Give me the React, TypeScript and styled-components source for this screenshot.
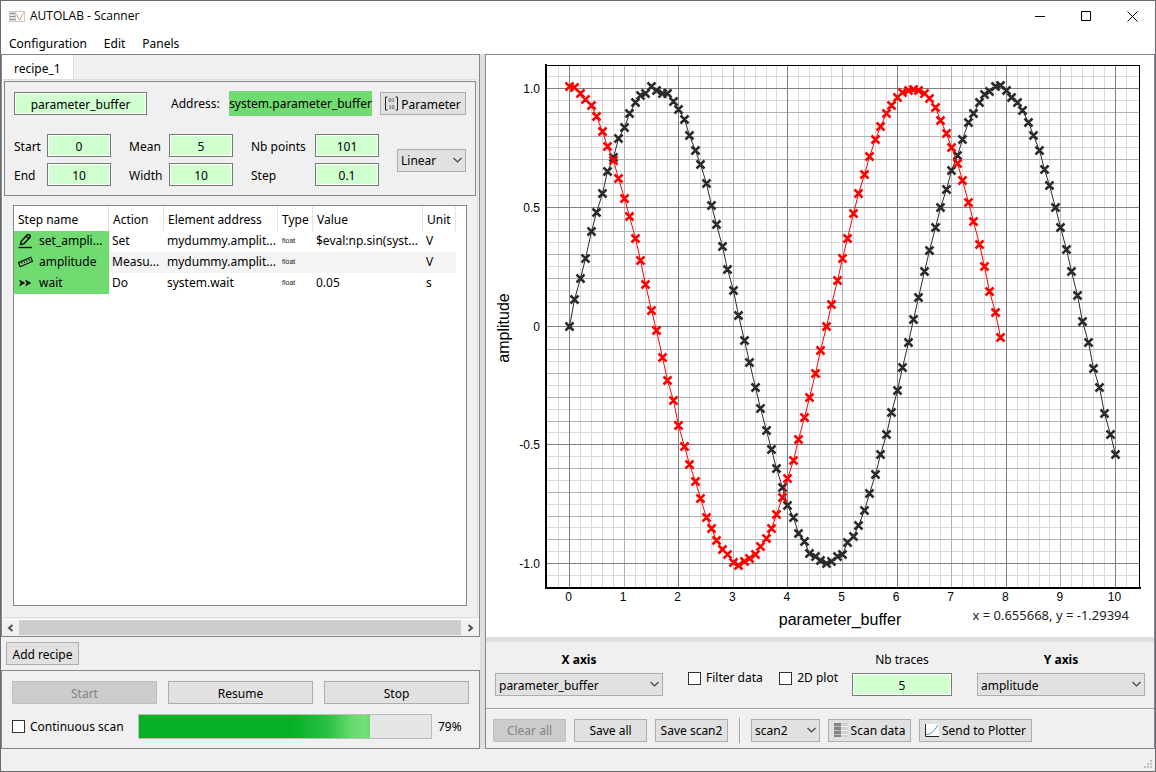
import React from "react";
import styled, { createGlobalStyle, css } from "styled-components";

const color = {
  face: "#f0f0f0",
  frame: "#828790",
  line: "#dcdcdc",
  button: "#e1e1e1",
  buttonEdge: "#adadad",
  field: "#d0ffd0",
  fieldEdge: "#7a7a7a",
  accent: "#70db70",
};

const GlobalStyle = createGlobalStyle`
  *, *::before, *::after { box-sizing: border-box; }
  body { margin: 0; background: ${color.face}; }
  body, button, input, select, table {
    font-family: "Noto Sans", "Open Sans", sans-serif;
    font-size: 12px;
    line-height: 16px;
    color: #000;
  }
`;

const Window = styled.div`
  display: flex;
  flex-direction: column;
  min-height: 100vh;
  border: 1px solid #6b6b6e;
  background: ${color.face};
`;

const TitleBar = styled.header`
  display: flex;
  align-items: center;
  height: 30px;
  padding-left: 8px;
  background: #fff;
`;

const Title = styled.h1`
  flex: 1;
  margin: 0 0 0 5px;
  font-family: "Open Sans", "Noto Sans", sans-serif;
  font-size: 12px;
  font-weight: 400;
  line-height: 16px;
`;

const CaptionButton = styled.button`
  display: flex;
  align-items: center;
  justify-content: center;
  width: 46px;
  height: 30px;
  padding: 0;
  border: 0;
  background: transparent;
`;

const MenuBar = styled.nav`
  display: flex;
  gap: 17px;
  height: 23px;
  padding: 5px 8px 2px;
  background: #fff;
`;

const MenuItem = styled.button`
  padding: 0;
  border: 0;
  background: transparent;
`;

const Workspace = styled.main`
  flex: 1;
  display: grid;
  grid-template-columns: minmax(0, 479fr) 5px minmax(0, 670fr);
`;

const Splitter = styled.div`
  flex: none;
  min-height: 5px;
  background: #dfdfdf;
`;

const Column = styled.section`
  display: flex;
  flex-direction: column;
  min-width: 0;
`;

const ScrollArea = styled.div`
  flex: 1;
  display: flex;
  flex-direction: column;
  border: 1px solid ${color.frame};
`;

const TabBar = styled.div`
  display: flex;
  height: 24px;
`;

const Tab = styled.button`
  padding: 4px 12px 0;
  border: 0;
  border-right: 1px solid ${color.line};
  background: #fff;
`;

const TabPane = styled.div`
  flex: 1;
  display: flex;
  flex-direction: column;
  margin-right: 1px;
  padding: 1px 1px 11px;
  border: 1px solid ${color.line};
  border-left-color: #fff;
`;

const ParameterFrame = styled.div`
  border: 1px solid ${color.frame};
  padding: 9px;
`;

const AddressRow = styled.div`
  display: flex;
  align-items: center;
  height: 25px;
`;

const Address = styled.output`
  margin: 0 8px 0 auto;
  height: 25px;
  line-height: 26px;
  background: ${color.accent};
`;

const AddressLabel = styled.label`
  margin-left: 24px;
`;

const RangeRow = styled.div`
  display: flex;
  align-items: center;
  justify-content: space-between;
  margin-top: 18px;
`;

const FieldPair = styled.div<{ $width: string }>`
  display: grid;
  grid-template-columns: 1fr 64px;
  align-items: center;
  gap: 6px;
  width: ${(p) => p.$width};
  white-space: nowrap;
  label { padding-top: 2px; }
`;

const TextField = styled.input<{ $width: string }>`
  appearance: none;
  width: ${(p) => p.$width};
  height: 23px;
  padding: 1px 2px 0;
  border: 1px solid ${color.fieldEdge};
  background: ${color.field};
  box-shadow: inset 0 0 0 1px #fff;
  text-align: center;
  border-radius: 0;
`;

const Button = styled.button<{ $width?: string }>`
  display: inline-flex;
  align-items: center;
  justify-content: center;
  gap: 3px;
  width: ${(p) => p.$width ?? "auto"};
  height: 23px;
  padding: 2px 3px 0;
  border: 1px solid ${color.buttonEdge};
  background: ${color.button};
  white-space: nowrap;
  svg { margin-bottom: 2px; }
  &:disabled {
    color: #838383;
    background: #ccc;
    border-color: #bfbfbf;
  }
`;

const SelectBox = styled.div<{ $width: string }>`
  position: relative;
  width: ${(p) => p.$width};
  height: 23px;
  svg {
    position: absolute;
    right: 4px;
    top: 8px;
    pointer-events: none;
  }
`;

const NativeSelect = styled.select`
  appearance: none;
  width: 100%;
  height: 23px;
  padding: 2px 16px 0 3px;
  border: 1px solid ${color.buttonEdge};
  border-radius: 0;
  background: ${color.button};
`;

const TreeFrame = styled.div`
  flex: 1;
  margin: 9px 9px 0;
  padding-right: 10px;
  border: 1px solid ${color.frame};
  background: #fff;
`;

const StepTable = styled.table`
  width: 100%;
  table-layout: fixed;
  border-collapse: separate;
  border-spacing: 0;
  white-space: nowrap;
`;

const cell = css`
  padding: 0 0 0 4px;
  text-align: left;
  font-weight: 400;
  overflow: hidden;
`;

const HeadCell = styled.th`
  ${cell}
  height: 25px;
  padding-top: 2px;
  border-right: 1px solid #e5e5e5;
`;

const StepRow = styled.tr`
  height: 21px;
  &:nth-child(even) { background: #f4f4f4; }
`;

const Cell = styled.td`
  ${cell}
  padding: 0 0 1px 3px;
`;

const NameCell = styled.td`
  ${cell}
  padding-bottom: 1px;
  background: ${color.accent};
`;

const StepName = styled.span`
  display: flex;
  align-items: center;
  gap: 6px;
`;

const TypeTag = styled.span`
  padding-left: 1px;
  font-family: "Liberation Sans", Arial, sans-serif;
  font-size: 7px;
  line-height: 8px;
  vertical-align: 2px;
  color: #222;
`;

const ScrollBar = styled.div`
  display: grid;
  grid-template-columns: 17px 1fr 18px;
  height: 17px;
  margin-top: 1px;
  padding-bottom: 1px;
  border-top: 1px solid #fff;
`;

const ScrollButton = styled.button`
  display: flex;
  align-items: center;
  justify-content: center;
  padding: 0;
  border: 0;
  background: ${color.face};
`;

const ScrollThumb = styled.div`
  background: #cdcdcd;
`;

const RecipeBar = styled.div`
  padding: 5px 5px;
  height: 33px;
`;

const RunFrame = styled.div`
  border: 1px solid ${color.frame};
  padding: 10px 10px 9px;
`;

const RunButtons = styled.div`
  display: grid;
  grid-template-columns: repeat(3, 1fr);
  gap: 11px;
`;

const RunStatus = styled.div`
  display: flex;
  align-items: center;
  margin-top: 10px;
`;

const CheckLabel = styled.label`
  display: inline-flex;
  align-items: center;
  gap: 5px;
  white-space: nowrap;
`;

const CheckBox = styled.input`
  appearance: none;
  width: 13px;
  height: 13px;
  margin: 0;
  border: 1px solid #333;
  background: #fff;
`;

const ProgressTrack = styled.div`
  flex: 1;
  height: 25px;
  margin: 0 6px 0 14px;
  border: 1px solid #bcbcbc;
  background: #e6e6e6;
`;

const ProgressFill = styled.div`
  height: 100%;
  background: linear-gradient(90deg, #06b025 66%, #2cc045 82%, #66da6c 92%, #74e07a 98%, #66da6c);
`;

const Percent = styled.span`
  width: 31px;
`;

const PlotColumn = styled(Column)`
  border: 1px solid ${color.frame};
`;

const PlotArea = styled.div`
  flex: 1 1 0;
  min-height: 400px;
  display: flex;
  background: #fff;
  svg { display: block; width: 100%; height: 100%; }
`;

const AxisBar = styled.div`
  display: flex;
  height: 66px;
  padding: 10px 9px 12px;
`;

const AxisChoice = styled.div<{ $bold?: boolean; $width: string }>`
  display: flex;
  flex-direction: column;
  align-items: center;
  justify-content: space-between;
  width: ${(p) => p.$width};
  > label { font-weight: ${(p) => (p.$bold ? 700 : 400)}; }
`;

const CheckGroup = styled.div`
  flex: 1;
  display: flex;
  align-items: center;
  justify-content: space-between;
  padding: 8px 14px 0 25px;
`;

const TracesChoice = styled(AxisChoice)`
  margin-right: 25px;
`;

const ScanBar = styled.div`
  display: flex;
  align-items: center;
  gap: 8px;
  height: 40px;
  padding: 3px 7px 0;
  border-top: 1px solid #a0a0a0;
  box-shadow: inset 0 1px #fff;
`;

const Divider = styled.div`
  width: 2px;
  height: 25px;
  margin: 0 2px 0 3px;
  border-left: 1px solid #a0a0a0;
  background: #fff;
`;

const StatusBar = styled.footer`
  display: flex;
  align-items: flex-end;
  justify-content: flex-end;
  height: 22px;
  padding: 2px;
`;

/* ---------- Icons ---------- */

const AppIcon = () => (
  <svg width="16" height="11" viewBox="0 0 16 11" aria-hidden="true">
    <rect width="16" height="11" fill="#c9c9c9" />
    <rect x="1" y="1" width="5" height="9" fill="#dfe8df" />
    <path d="M1 2.500h5M1 5.500h5M1 8.500h5" stroke="#8e8e8e" />
    <rect x="7" y="1" width="8" height="9" fill="#fff" />
    <path d="M7.500 3 L9 6.500 L10.500 9 L12 6.500 L14.500 1.500" stroke="#f0918f" fill="none" />
  </svg>
);

const PencilIcon = () => (
  <svg width="15" height="16" viewBox="0 0 15 16" fill="none" stroke="#111" aria-hidden="true">
    <path d="M2.500 11.500 L3.200 8.300 L9.200 1.900 Q10.500 1 11.800 2.200 Q12.900 3.500 11.900 4.600 L5.800 10.800 Z M8.300 3.200 L10.900 5.600" strokeWidth="1.500" />
    <path d="M0.500 14.500h13.500" strokeWidth="1.400" />
  </svg>
);

const RulerIcon = () => (
  <svg width="15" height="16" viewBox="0 0 15 16" fill="none" stroke="#111" aria-hidden="true">
    <path d="M0.500 8.600 L12.800 3.300 L14.500 7.400 L2.200 12.800 Z" strokeWidth="1.200" />
    <path d="M3.200 7.700 l1 2.200 M5.700 6.700 l1 2.200 M8.200 5.700 l1 2.200 M10.700 4.700 l1 2.200" />
  </svg>
);

const ForwardIcon = () => (
  <svg width="15" height="16" viewBox="0 0 15 16" fill="#111" aria-hidden="true">
    <path d="M1 4.500 L7.300 8 L1 11.500 L2.600 8 Z M7 4.500 L13.300 8 L7 11.500 L8.600 8 Z" />
  </svg>
);

const MatrixIcon = () => (
  <svg width="13" height="15" viewBox="0 0 13 15" aria-hidden="true">
    <path d="M2.500 1H0.500V14H2.500M10.500 1H12.500V14H10.500" fill="none" stroke="#222" />
    <g fontFamily="Liberation Serif, serif" fontSize="6" fill="#222" textAnchor="middle">
      <text x="6.500" y="6">01</text>
      <text x="6.500" y="13">10</text>
    </g>
  </svg>
);

const TableIcon = () => (
  <svg width="14" height="14" viewBox="0 0 14 14" aria-hidden="true">
    <rect width="14" height="14" fill="#d2d2d2" />
    <rect width="7" height="14" fill="#858585" />
    <path d="M0 3.500h7M0 7.500h7M0 11.500h7" stroke="#bdbdbd" />
    <path d="M7 3.500h7M7 7.500h7M7 11.500h7" stroke="#efefef" />
  </svg>
);

const CurveIcon = () => (
  <svg width="14" height="13" viewBox="0 0 14 13" fill="none" aria-hidden="true">
    <rect width="14" height="13" fill="#fff" />
    <path d="M1 10.500 C6 10.500 9 7 13 1" stroke="#4a90c8" />
    <path d="M0.500 0V12.500H14" stroke="#222" />
  </svg>
);

const Chevron = () => (
  <svg width="9" height="6" viewBox="0 0 9 6" fill="none" aria-hidden="true">
    <path d="M0.500 1 L4.500 5 L8.500 1" stroke="#444" strokeWidth="1.200" />
  </svg>
);

const ScrollArrow = ({ right }: { right?: boolean }) => (
  <svg width="7" height="8" viewBox="0 0 7 8" fill="none" aria-hidden="true">
    <path d={right ? "M1.500 1 L5 4 L1.500 7" : "M5.500 1 L2 4 L5.500 7"} stroke="#505050" strokeWidth="2" />
  </svg>
);

const SizeGrip = () => (
  <svg width="9" height="9" viewBox="0 0 9 9" fill="#bfbfbf" aria-hidden="true">
    <path d="M6 0h2v2h-2zM3 3h2v2h-2zM6 3h2v2h-2zM0 6h2v2h-2zM3 6h2v2h-2zM6 6h2v2h-2z" />
  </svg>
);

/* ---------- Plot ---------- */

const scan2 = [
  1.01, 1.003, 0.979, 0.952, 0.927, 0.883, 0.817, 0.757, 0.696, 0.619,
  0.535, 0.462, 0.367, 0.276, 0.174, 0.067, -0.017, -0.132, -0.228, -0.313,
  -0.417, -0.509, -0.585, -0.656, -0.728, -0.808, -0.853, -0.905, -0.939, -0.964,
  -0.996, -1.007, -0.99, -0.977, -0.96, -0.93, -0.896, -0.853, -0.795, -0.72,
  -0.644, -0.568, -0.479, -0.385, -0.303, -0.202, -0.102, -0.004, 0.092, 0.193,
  0.286, 0.37, 0.475, 0.559, 0.636, 0.714, 0.787, 0.838, 0.893, 0.93,
  0.963, 0.983, 0.991, 0.996, 0.993, 0.98, 0.96, 0.922, 0.866, 0.809,
  0.75, 0.684, 0.612, 0.522, 0.442, 0.344, 0.249, 0.147, 0.058, -0.05,
];

const scan1 = [
  0, 0.11, 0.198, 0.286, 0.4, 0.479, 0.559, 0.649, 0.708, 0.791,
  0.836, 0.896, 0.939, 0.969, 0.977, 1.007, 0.991, 0.98, 0.977, 0.947,
  0.912, 0.871, 0.802, 0.741, 0.68, 0.602, 0.509, 0.427, 0.333, 0.236,
  0.151, 0.043, -0.063, -0.155, -0.257, -0.349, -0.441, -0.518, -0.6, -0.681,
  -0.757, -0.808, -0.873, -0.908, -0.956, -0.972, -0.987, -0.999, -0.99, -0.97,
  -0.96, -0.913, -0.885, -0.838, -0.778, -0.707, -0.626, -0.543, -0.458, -0.366,
  -0.273, -0.174, -0.07, 0.028, 0.122, 0.228, 0.316, 0.413, 0.499, 0.576,
  0.656, 0.718, 0.787, 0.855, 0.896, 0.942, 0.974, 0.987, 1.01, 1.011,
  0.993, 0.964, 0.943, 0.909, 0.858, 0.804, 0.741, 0.657, 0.593, 0.498,
  0.413, 0.324, 0.228, 0.127, 0.021, -0.07, -0.181, -0.26, -0.368, -0.458,
  -0.539,
];

const plot = { left: 61, right: 653, top: 11, bottom: 532 };
const toX = (v: number) => 83.5 + v * 54.6;
const toY = (v: number) => 271 - v * 237.5;
const snap = (v: number) => Math.floor(v) + 0.5;

const shade = ["#7f7f7f", "#b2b2b2", "#d9d9d9"];

const range = (from: number, to: number) =>
  Array.from({ length: to - from + 1 }, (_, i) => from + i);

const columns = range(-1, 51).map((i) => ({
  at: snap(toX(i / 5)),
  level: i % 10 === 0 ? 0 : i % 5 === 0 ? 1 : 2,
}));

const rows = range(-21, 21).map((i) => ({
  at: snap(toY(i / 20)),
  level: i % 10 === 0 ? 0 : i % 2 === 0 ? 1 : 2,
}));

const Trace = ({ values, stroke }: { values: number[]; stroke: string }) => {
  const points = values.map((v, i) => [snap(toX(i / 10)), snap(toY(v))]);
  const crosses = points.map(([x, y]) => `M${x - 4} ${y - 4}l8 8m0 -8l-8 8`).join("");
  return (
    <g fill="none" stroke={stroke}>
      <polyline points={points.map((p) => p.join(",")).join(" ")} />
      <path d={crosses} strokeWidth="2.500" />
    </g>
  );
};

const Plot = () => (
  <svg viewBox="0 0 668 582" role="img" aria-label="amplitude against parameter_buffer">
    <g shapeRendering="crispEdges">
      {[2, 1, 0].map((level) => (
        <g key={level} stroke={shade[level]}>
          {columns.filter((c) => c.level === level).map((c) => (
            <line key={`x${c.at}`} x1={c.at} x2={c.at} y1={plot.top} y2={plot.bottom} />
          ))}
          {rows.filter((r) => r.level === level).map((r) => (
            <line key={`y${r.at}`} y1={r.at} y2={r.at} x1={plot.left} x2={plot.right} />
          ))}
        </g>
      ))}
      <path d="M60 10.500H653.500V533" fill="none" stroke="#000" />
      <path d="M60 9V533H655" fill="none" stroke="#000" strokeWidth="2" />
    </g>
    <Trace values={scan1} stroke="#2b2b2b" />
    <Trace values={scan2} stroke="#ff0000" />
    <g fontFamily="Liberation Sans, Arial, sans-serif" fontSize="12">
      {[1, 0.5, 0, -0.5, -1].map((v) => (
        <text key={v} x="54" y={toY(v) + 4.5} textAnchor="end">
          {v === 0 ? "0" : v.toFixed(1)}
        </text>
      ))}
      {range(0, 10).map((v) => (
        <text key={v} x={toX(v) - 1} y="546" textAnchor="middle">{v}</text>
      ))}
    </g>
    <g fontFamily="Liberation Sans, Arial, sans-serif" fontSize="16" textAnchor="middle">
      <text x="354" y="570">parameter_buffer</text>
      <text transform="translate(23 273) rotate(-90)">amplitude</text>
    </g>
    <text x="643" y="565" textAnchor="end" fontSize="13" fill="#222">x = 0.655668, y = -1.29394</text>
  </svg>
);

/* ---------- Page ---------- */

const Select = ({ id, value, label, width }: { id: string; value: string; label?: string; width: string }) => (
  <SelectBox $width={width}>
    <NativeSelect id={id} aria-label={label} defaultValue={value}>
      <option>{value}</option>
    </NativeSelect>
    <Chevron />
  </SelectBox>
);

const Field = ({ id, label, value }: { id: string; label: string; value: string }) => (
  <>
    <label htmlFor={id}>{label}</label>
    <TextField id={id} $width="64px" defaultValue={value} />
  </>
);

const headings = [
  { text: "Step name", width: 95 },
  { text: "Action", width: 55 },
  { text: "Element address", width: 114 },
  { text: "Type", width: 35 },
  { text: "Value", width: 110 },
  { text: "Unit", width: 33 },
];

const steps = [
  { icon: <PencilIcon />, name: "set_ampli...", action: "Set", address: "mydummy.amplit...", value: "$eval:np.sin(syst...", unit: "V" },
  { icon: <RulerIcon />, name: "amplitude", action: "Measu...", address: "mydummy.amplit...", value: "", unit: "V" },
  { icon: <ForwardIcon />, name: "wait", action: "Do", address: "system.wait", value: "0.05", unit: "s" },
];

const Steps = () => (
  <TreeFrame>
    <StepTable>
      <colgroup>
        {headings.map((h) => <col key={h.text} width={`${(h.width / 442) * 100}%`} />)}
      </colgroup>
      <thead>
        <tr>{headings.map((h) => <HeadCell key={h.text}>{h.text}</HeadCell>)}</tr>
      </thead>
      <tbody>
        {steps.map((s) => (
          <StepRow key={s.name}>
            <NameCell><StepName>{s.icon}{s.name}</StepName></NameCell>
            <Cell>{s.action}</Cell>
            <Cell>{s.address}</Cell>
            <Cell><TypeTag>float</TypeTag></Cell>
            <Cell>{s.value}</Cell>
            <Cell>{s.unit}</Cell>
          </StepRow>
        ))}
      </tbody>
    </StepTable>
  </TreeFrame>
);

const progress = 79;

export default function App() {
  return (
    <Window>
      <GlobalStyle />
      <TitleBar>
        <AppIcon />
        <Title>AUTOLAB - Scanner</Title>
        <CaptionButton aria-label="Minimize">
          <svg width="11" height="11"><path d="M0 5.500h10" stroke="#000" /></svg>
        </CaptionButton>
        <CaptionButton aria-label="Maximize">
          <svg width="11" height="11"><path d="M0.500 0.500h9v9h-9z" fill="none" stroke="#000" /></svg>
        </CaptionButton>
        <CaptionButton aria-label="Close">
          <svg width="11" height="11"><path d="M0.500 0.500l10 10m0 -10l-10 10" stroke="#000" /></svg>
        </CaptionButton>
      </TitleBar>
      <MenuBar>
        <MenuItem>Configuration</MenuItem>
        <MenuItem>Edit</MenuItem>
        <MenuItem>Panels</MenuItem>
      </MenuBar>

      <Workspace>
        <Column>
          <ScrollArea>
            <TabBar role="tablist">
              <Tab role="tab" aria-selected="true">recipe_1</Tab>
            </TabBar>
            <TabPane>
              <ParameterFrame>
                <AddressRow>
                  <TextField $width="133px" aria-label="Parameter name" defaultValue="parameter_buffer" />
                  <AddressLabel htmlFor="address">Address:</AddressLabel>
                  <Address id="address">system.parameter_buffer</Address>
                  <Button $width="86px"><MatrixIcon />Parameter</Button>
                </AddressRow>
                <RangeRow>
                  <FieldPair $width="97px">
                    <Field id="start" label="Start" value="0" />
                    <Field id="end" label="End" value="10" />
                  </FieldPair>
                  <FieldPair $width="104px">
                    <Field id="mean" label="Mean" value="5" />
                    <Field id="width" label="Width" value="10" />
                  </FieldPair>
                  <FieldPair $width="128px">
                    <Field id="points" label="Nb points" value="101" />
                    <Field id="step" label="Step" value="0.1" />
                  </FieldPair>
                  <Select id="scale" label="Scale" value="Linear" width="69px" />
                </RangeRow>
              </ParameterFrame>
              <Steps />
            </TabPane>
            <ScrollBar>
              <ScrollButton aria-label="Scroll left"><ScrollArrow /></ScrollButton>
              <ScrollThumb />
              <ScrollButton aria-label="Scroll right"><ScrollArrow right /></ScrollButton>
            </ScrollBar>
          </ScrollArea>
          <RecipeBar>
            <Button $width="73px">Add recipe</Button>
          </RecipeBar>
          <RunFrame>
            <RunButtons>
              <Button disabled>Start</Button>
              <Button>Resume</Button>
              <Button>Stop</Button>
            </RunButtons>
            <RunStatus>
              <CheckLabel><CheckBox type="checkbox" />Continuous scan</CheckLabel>
              <ProgressTrack role="progressbar" aria-label="Scan progress" aria-valuenow={progress}>
                <ProgressFill style={{ width: `${progress}%` }} />
              </ProgressTrack>
              <Percent>{progress}%</Percent>
            </RunStatus>
          </RunFrame>
        </Column>

        <Splitter />

        <PlotColumn>
          <PlotArea><Plot /></PlotArea>
          <Splitter />
          <AxisBar>
            <AxisChoice $bold $width="168px">
              <label htmlFor="x-axis">X axis</label>
              <Select id="x-axis" value="parameter_buffer" width="100%" />
            </AxisChoice>
            <CheckGroup>
              <CheckLabel><CheckBox type="checkbox" />Filter data</CheckLabel>
              <CheckLabel><CheckBox type="checkbox" />2D plot</CheckLabel>
            </CheckGroup>
            <TracesChoice $width="100px">
              <label htmlFor="traces">Nb traces</label>
              <TextField id="traces" $width="100%" defaultValue="5" />
            </TracesChoice>
            <AxisChoice $bold $width="168px">
              <label htmlFor="y-axis">Y axis</label>
              <Select id="y-axis" value="amplitude" width="100%" />
            </AxisChoice>
          </AxisBar>
          <ScanBar>
            <Button $width="73px" disabled>Clear all</Button>
            <Button $width="73px">Save all</Button>
            <Button $width="73px">Save scan2</Button>
            <Divider />
            <Select id="scan" label="Scan" value="scan2" width="69px" />
            <Button $width="83px"><TableIcon />Scan data</Button>
            <Button $width="113px"><CurveIcon />Send to Plotter</Button>
          </ScanBar>
        </PlotColumn>
      </Workspace>

      <StatusBar><SizeGrip /></StatusBar>
    </Window>
  );
}
